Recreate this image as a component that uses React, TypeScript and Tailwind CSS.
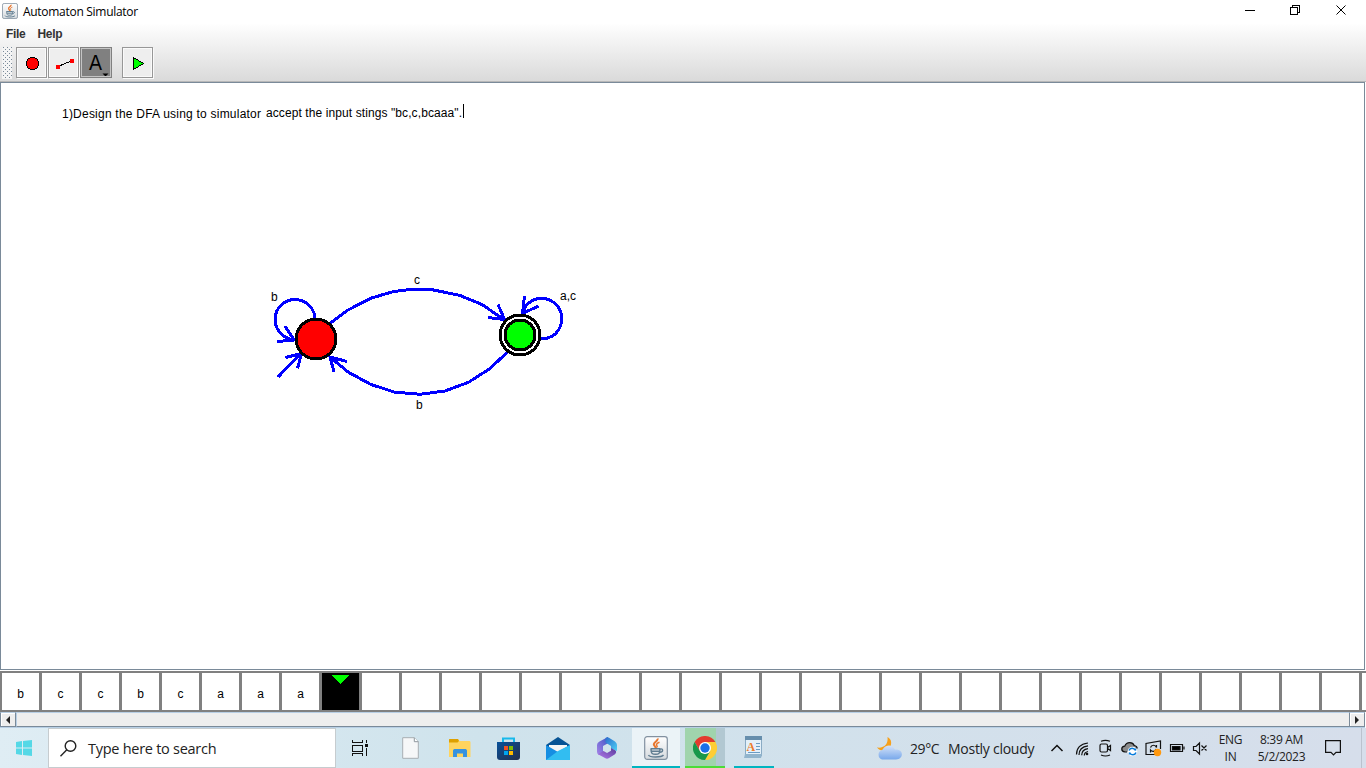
import React from "react";

const tape = ["b", "c", "c", "b", "c", "a", "a", "a"];

function JavaCup({ className }: { className: string }) {
  return (
    <svg className={className} viewBox="0 0 24 24" fill="none">
      <defs>
        <linearGradient id="tile" x1="0" y1="0" x2="0" y2="1">
          <stop offset="0" stopColor="#ffffff" />
          <stop offset="1" stopColor="#d5dade" />
        </linearGradient>
      </defs>
      <rect x="0.7" y="0.7" width="22.6" height="22.6" rx="2.5" fill="url(#tile)" stroke="#8291a0" strokeWidth="1.2" />
      <path d="M13.500 2.500c1.200 2.500-5 4-3.500 6.500 .5 1 1.800 1.500 1.300 3" stroke="#e8762d" strokeWidth="2" />
      <path d="M15.500 6.300c-2.200.8-3.700 1.900-2.700 3.200 .7.8.4 1.500-.4 2.200" stroke="#e8762d" strokeWidth="1.500" />
      <path d="M6.500 12.800h9.500M7 13c0 5 1.500 5.300 4.500 5.300s4.500-.4 4.500-5.300M7.500 15.300h8" stroke="#607d91" strokeWidth="1.500" />
      <path d="M16 13c3.500-1 3.500 3-.3 3.300M4.500 19c1 2.600 13 2.600 15 0" stroke="#607d91" strokeWidth="1.400" />
    </svg>
  );
}

function WindowControls() {
  return (
    <svg className="h-6 w-[138px]" viewBox="0 0 138 24" fill="none" stroke="#000" shapeRendering="crispEdges">
      <path d="M17 10.500h10M62.500 7.500h7v7h-7zM64.500 7.500v-2h7v7h-2" />
      <path d="M108.500 5.500l9 9M117.500 5.500l-9 9" shapeRendering="auto" />
    </svg>
  );
}

function TitleBar() {
  return (
    <header className="flex h-[23px] shrink-0 items-start bg-white">
      <JavaCup className="ml-[2px] mt-[3px] size-4" />
      <span className="ml-[5px] mt-[3px] text-[12px] leading-[17px] tracking-[-0.29px] whitespace-nowrap">Automaton Simulator</span>
      <div className="ml-auto">
        <WindowControls />
      </div>
    </header>
  );
}

const toolClass =
  "flex h-[31px] w-[31px] items-center justify-center border border-[#979797] bg-[#eee] shadow-[inset_0_0_0_1px_#fafafa,1px_1px_0_#fafafa]";

function Toolbar() {
  return (
    <div className="flex h-[36px] items-start pl-[2px] pt-[2px]">
      <svg className="h-[32px] w-[10px]" viewBox="0 0 10 32" shapeRendering="crispEdges">
        <defs>
          <pattern id="grip" width="4" height="4" patternUnits="userSpaceOnUse">
            <rect width="4" height="4" fill="#f4f4f4" />
            <path d="M1 0h1v1h-1zM3 2h1v1h-1z" fill="#7a8a99" />
          </pattern>
        </defs>
        <rect width="10" height="32" fill="url(#grip)" />
      </svg>
      <div className="ml-[4px] flex gap-px">
        <button className={toolClass}>
          <svg className="h-[27px] w-[27px] shrink-0" viewBox="0 0 27 27" shapeRendering="crispEdges">
            <circle cx="14.500" cy="14.500" r="6.200" fill="#f00" stroke="#000" />
          </svg>
        </button>
        <button className={toolClass}>
          <svg className="h-[27px] w-[27px] shrink-0" viewBox="0 0 27 27" shapeRendering="crispEdges">
            <path d="M8 17.500L21 12" stroke="#000" />
            <path d="M6 16h4v4h-4zM20 10h4v4h-4z" fill="#f00" />
          </svg>
        </button>
        <button className="flex h-[31px] w-[32px] items-center justify-end border border-[#808080] bg-[#808080] pr-[2px] shadow-[inset_1px_1px_0_#c4c4c4,inset_-1px_-1px_0_#c4c4c4]">
          <svg className="h-[27px] w-[27px] shrink-0" viewBox="0 0 27 27">
            <text x="7" y="21" fontSize="22" textLength="13" lengthAdjust="spacingAndGlyphs">A</text>
            <path d="M20.500 24.500h6l-3 3z" />
          </svg>
        </button>
      </div>
      <button className={toolClass + " ml-[10px]"}>
        <svg className="h-[27px] w-[27px] shrink-0" viewBox="0 0 27 27" shapeRendering="crispEdges">
          <path d="M9.500 8.500v12l10-6z" fill="#0f0" stroke="#000" />
        </svg>
      </button>
    </div>
  );
}

function Diagram() {
  return (
    <svg className="block h-[586px] w-[1362px]" viewBox="1 83 1362 586" fill="none">
      <g fill="#000" fontSize="12">
        <text x="62" y="118" textLength="199">1)Design the DFA using to simulator</text>
        <text x="266" y="117" textLength="196">accept the input stings "bc,c,bcaaa".</text>
        <text x="271" y="301">b</text>
        <text x="414" y="284">c</text>
        <text x="416" y="409">b</text>
        <text x="560" y="300" textLength="16">a,c</text>
      </g>
      <g shapeRendering="crispEdges">
        <path d="M463.500 104v14" stroke="#000" />
        <g stroke="#00f" strokeWidth="3">
          <path d="M315 320A20 20 0 1 0 287.500 338L294 341M285 326l9 14-17 1.500" />
          <path d="M278 377l23-24M285.500 357.500l16-4-4 15" />
          <path d="M330 323.500L348 310 371.500 298 393 291.700 408 289.700H432L445 292.300 460 295.500 482 304.500 504.500 320M498 304.500l6.500 15-16.500-2" />
          <path d="M507.500 352L490 368.500 468.500 382.300 445 391 420 394.300 394 392 370.500 384.300 348.500 372.300 330 357M334 372l-4-15 17 4.500" />
          <path d="M540.500 338.300H547A20.300 20.300 0 1 0 525 307L522.300 314M524.500 296l-2 17.500 16-7.500" />
        </g>
        <g stroke="#000" strokeWidth="3">
          <circle cx="316" cy="339" r="20" fill="#f00" />
          <circle cx="520" cy="335" r="20" fill="#fff" />
          <circle cx="520" cy="335" r="15" fill="#0f0" />
        </g>
      </g>
    </svg>
  );
}

function Tape() {
  return (
    <div className="flex h-[41px] w-[1366px] shrink-0 overflow-hidden border-y-2 border-l-2 border-[#808080] bg-white">
      {Array.from({ length: 35 }, (_, i) => (
        <div
          key={i}
          className={
            i === 8
              ? "flex w-[40px] shrink-0 justify-center border-r-[3px] border-[#808080] bg-black pr-[1px] pt-[2px]"
              : "flex w-[40px] shrink-0 items-center justify-center border-r-[3px] border-[#808080] pt-[4px] text-[12px]"
          }
        >
          {i === 8 ? (
            <svg className="h-[9px] w-[18px]" viewBox="0 0 18 9" shapeRendering="crispEdges">
              <path d="M0 0h18l-9 9z" fill="#0f0" />
            </svg>
          ) : (
            tape[i]
          )}
        </div>
      ))}
    </div>
  );
}

function ScrollBar() {
  return (
    <div className="flex h-[16px] w-[1365px] shrink-0 border-b border-[#b8cfe5] bg-[#eee]">
      <div className="flex w-[16px] items-center justify-center border-x border-b border-t border-[#7a8a99] border-t-[#b8cfe5] bg-[#eee] shadow-[inset_1px_1px_white]">
        <svg className="h-[8px] w-[4px]" viewBox="0 0 4 8"><path d="M4 0v8L0 4z" fill="#222" /></svg>
      </div>
      <div className="flex-1 border-b border-l border-t border-[#b8cfe5] border-b-[#7a8a99]" />
      <div className="flex w-[16px] items-center justify-center border-x border-b border-t border-[#7a8a99] border-t-[#b8cfe5] bg-[#eee] shadow-[inset_1px_1px_white]">
        <svg className="h-[8px] w-[4px]" viewBox="0 0 4 8"><path d="M0 0v8l4-4z" fill="#222" /></svg>
      </div>
    </div>
  );
}

function PinnedIcons() {
  return (
    <>
      <div className="flex w-[48px] justify-center">
        <svg className="h-[16px] w-[17px]" viewBox="0 0 17 16" fill="none" stroke="#111" shapeRendering="crispEdges">
          <path d="M.5 0v2.500h10V0M.5 5.500h10v6H.5zM.5 16v-2.500h10V16M14.500 0v3M14.500 8v8" />
          <path d="M13 4h3v3h-3z" fill="#111" stroke="none" />
        </svg>
      </div>
      <div className="flex w-[53px] justify-center">
        <svg className="h-[22px] w-[17px]" viewBox="0 0 17 22">
          <path d="M.7.7h11.600l4 4v16.600H.7z" fill="#f6f7f8" stroke="#a8aeb3" />
          <path d="M12.300.7v4h4" fill="#fff" stroke="#8e969d" />
        </svg>
      </div>
      <div className="flex w-[44px] justify-center pl-[2px]">
        <svg className="h-[19px] w-[22px]" viewBox="0 0 22 19">
          <path d="M0 1c0-.6.4-1 1-1h8l1.500 2H20c1 0 1.500.5 1.500 1.500V18H0z" fill="#ffd45e" />
          <path d="M0 1c0-.6.4-1 1-1h8l1 2-1.500 1.500H0z" fill="#dea000" />
          <path d="M4 18v-6c0-1 .5-2 1.500-2h11c1 0 1.500 1 1.500 2v6h-4v-3.500H8V18z" fill="#3692e0" />
        </svg>
      </div>
      <div className="flex w-[54px] justify-center">
        <svg className="h-[23px] w-[23px]" viewBox="0 0 23 23">
          <defs><linearGradient id="store" x1="0" y1="0" x2="1" y2="1"><stop stopColor="#08519a" /><stop offset="1" stopColor="#252e4c" /></linearGradient></defs>
          <path d="M6 7V1.500h11V7" fill="none" stroke="#18b9eb" strokeWidth="2" />
          <path d="M0 5h23v15c0 2-1 3-3 3H3c-2 0-3-1-3-3z" fill="url(#store)" />
          <path d="M7 9h4v4H7z" fill="#f25022" /><path d="M12 9h4v4h-4z" fill="#7fba00" />
          <path d="M7 14h4v4H7z" fill="#00a4ef" /><path d="M12 14h4v4h-4z" fill="#ffb900" />
        </svg>
      </div>
      <div className="flex w-[46px] justify-center">
        <svg className="h-[23px] w-[24px]" viewBox="0 0 24 23">
          <path d="M0 8L12 0l12 8v4H0z" fill="#075394" />
          <path d="M3 8h18v8H3z" fill="#f5f5f5" />
          <path d="M0 8l12 7 12-7v15H0z" fill="#168ee2" />
          <path d="M0 23l12-9 12-6v15z" fill="#32bdf1" />
        </svg>
      </div>
      <div className="flex w-[51px] justify-center">
        <svg className="h-[22px] w-[20px]" viewBox="0 0 20 22">
          <defs>
            <linearGradient id="m1" x1="0" y1="1" x2="1" y2="0"><stop stopColor="#a884e8" /><stop offset="1" stopColor="#3a54c4" /></linearGradient>
            <linearGradient id="m2" x1="0" y1="1" x2="1" y2="0"><stop stopColor="#b07bea" /><stop offset="1" stopColor="#5a3a9c" /></linearGradient>
            <linearGradient id="m3" x1="0" y1="0" x2="1" y2="1"><stop stopColor="#2a6ccc" /><stop offset="1" stopColor="#4fd0f5" /></linearGradient>
          </defs>
          <path d="M11 0L2.500 4.600Q0 6 0 8v7q0 2 2 3l4-2.500V9l5.500-3z" fill="url(#m1)" />
          <path d="M8.500 1Q10-.3 12 .8L18 4.500Q20 6 20 8v6l-6-2.500V9L8.500 5.500z" fill="url(#m3)" />
          <path d="M1 17.300L6.500 14l3.500 2 4-2.300V11l4.500 2.500Q20 15 18 17.300L12 21q-2 1.500-4 0z" fill="url(#m2)" />
        </svg>
      </div>
    </>
  );
}

function Chrome() {
  return (
    <svg className="size-[24px]" viewBox="0 0 24 24">
      <path d="M12 6h10.400A12 12 0 0 0 1.600 6l5.200 9z" fill="#e33b2e" />
      <path d="M12 24l5.200-9V9l-5-3h10.200A12 12 0 0 1 12 24z" fill="#ffcd35" />
      <path d="M1.600 6l5.200 9L12 18l5.200-3L12 24A12 12 0 0 1 1.600 6z" fill="#18984a" />
      <circle cx="12" cy="12" r="6" fill="#fff" />
      <circle cx="12" cy="12" r="4.700" fill="#1a6fe8" />
    </svg>
  );
}

function Weather() {
  return (
    <svg className="h-[23px] w-[25px] shrink-0" viewBox="0 0 25 23">
      <defs><linearGradient id="cloud" x1="0" y1="0" x2="0" y2="1"><stop stopColor="#d4e2f8" /><stop offset="1" stopColor="#78a8eb" /></linearGradient></defs>
      <path d="M10.500 0c4.500 2 5 8 1 12-4 3-8.500 2-11.500-1.500 7 1 11.500-3.500 10.500-10.500z" fill="#f6a01b" />
      <path d="M5 22.500a5 5 0 0 1 0-9.500c1.500-.5 2-4.500 7-4.500 4 0 5 3 6 4 9-1 9 10 1 10z" fill="url(#cloud)" />
    </svg>
  );
}

function TrayIcons() {
  return (
    <svg className="h-[40px] w-[166px] shrink-0" viewBox="1046 728 166 40" fill="none" stroke="#111" strokeWidth="1.200">
      <path d="M1051.500 751l5.500-5.500 5.500 5.500" strokeWidth="1.500" />
      <g>
        <path d="M1076.500 754.500c0-6 4-10.500 11.500-11.500M1079 755c0-5 3.500-8.500 9-9.200M1081.700 755.300c0-3.500 2.300-6 6.300-6.600M1084.300 755.500c0-2 1.500-3.500 3.700-4" />
        <circle cx="1087" cy="754" r="1.300" fill="#111" stroke="none" />
      </g>
      <path d="M1101.500 744h4.500q1.500 0 1.500 1.500v5q0 1.500-1.500 1.500h-4.500q-1.500 0-1.500-1.500v-5q0-1.500 1.500-1.500zM1108 747.200l2.500-1.700v5l-2.500-1.700M1101 741.300q4.500-2 9 0M1101 755q4.500 2 9 0" />
      <path d="M1127 752h-2c-4.500-.5-4-5.500-.3-5.800 2-5 8-4.500 9.500-.7 2 .3 3 1.500 3 3" fill="#8b8b8b" />
      <circle cx="1132.500" cy="751.500" r="4.800" fill="#fff" stroke="none" />
      <path d="M1129 750.500c1-3 5-3 6.500 0v-2M1136 752.500c-1 3-5 3-6.500 0v2" stroke="#087cdc" strokeWidth="1.500" />
      <path d="M1155 754.500h-9v-11l14.500-2.500v8M1150.500 747.500c1-3 5-3 6 0v-2.500M1156 749c-1 3-4 3-5.500 1v2.500" />
      <circle cx="1157.500" cy="752.500" r="3.700" fill="#ff980f" stroke="none" />
      <path d="M1170.500 744.500h12v7h-12zM1184 746.500v3" />
      <path d="M1172.500 746.500h7.500v3.500h-7.500z" fill="#000" />
      <path d="M1193.500 746.500h2.500l3.500-3.500v11l-3.500-3.500h-2.500zM1201.500 745.500l5 5M1206.500 745.500l-5 5" />
    </svg>
  );
}

function Taskbar() {
  return (
    <footer className="flex h-[40px] shrink-0 items-center bg-linear-to-r from-[#dfedf4] via-[#cfe3ec] via-35% to-[#d6deeb] text-[#222]">
      <div className="flex w-[48px] justify-center">
        <svg className="size-[16px]" viewBox="0 0 16 16" fill="#55d8e6">
          <path d="M0 2l6-1v6.500H0zM7 .9l9-.9v7.500H7zM0 8.500h6V15l-6-1zM7 8.500h9V16l-9-1z" />
        </svg>
      </div>
      <div className="flex h-full w-[288px] items-center border border-[#c6cccf] bg-white pl-[11px]">
        <svg className="h-[17px] w-[17px]" viewBox="0 0 17 17" fill="none" stroke="#222" strokeWidth="1.400">
          <circle cx="10.500" cy="6" r="5.300" /><path d="M6.800 9.800L.5 16.200" />
        </svg>
        <span className="ml-[11px] mt-px text-[14.5px] tracking-[-0.27px] whitespace-nowrap">Type here to search</span>
      </div>
      <PinnedIcons />
      <div className="flex h-full w-[48px] items-center justify-center border-b-2 border-[#00b5c0] bg-[#ebf3f7] pt-[2px]">
        <JavaCup className="size-[24px]" />
      </div>
      <div className="ml-[5px] flex h-full w-[40px] items-center justify-center border-b-2 border-[#4bdc36] bg-linear-to-r from-[#a0d4ad] from-78% to-[#b2c8d2] to-78% pt-[2px]">
        <Chrome />
      </div>
      <div className="ml-[9px] flex h-full w-[40px] items-center justify-center border-b-2 border-[#00b5c0] pr-[1px]">
        <svg className="h-[22px] w-[19px]" viewBox="0 0 19 22">
          <path d="M1.500 1h16v19h-16z" fill="#e3f0f9" stroke="#8aabc4" />
          <path d="M1 0h17v4H1z" fill="#668eac" />
          <path d="M1 18h17l-1 4H0z" fill="#91b4cc" />
          <text x="2.500" y="14.500" fontSize="12" fontWeight="bold" fill="#ed7b2c" className="font-['Liberation_Serif',serif]">A</text>
          <path d="M12 7.500h4M12 10.500h4M12 13.500h4M4 16.500h12" stroke="#6b9cc4" />
        </svg>
      </div>
      <div className="ml-auto flex h-full w-[489px] items-center">
        <Weather />
        <span className="ml-[8px] mt-px w-[38px] text-[14px] tracking-[-0.4px] whitespace-nowrap">29°C</span>
        <span className="mt-px w-[98px] text-[14px] tracking-[-0.27px] whitespace-nowrap">Mostly cloudy</span>
        <TrayIcons />
        <div className="flex w-[37px] flex-col items-center text-[12px] leading-[17px] tracking-[-0.3px]"><span>ENG</span><span>IN</span></div>
        <div className="flex w-[65px] flex-col items-center text-[12px] leading-[17px] tracking-[-0.32px] whitespace-nowrap"><span>8:39 AM</span><span>5/2/2023</span></div>
        <svg className="ml-[11px] h-[16px] w-[16px]" viewBox="0 0 16 16" fill="none" stroke="#111" strokeWidth="1.200">
          <path d="M.6.6h14.800v11.800H11L8.500 15 6 12.400H.6z" />
        </svg>
        <div className="ml-[20px] h-full w-px bg-[#bac2ce]" />
      </div>
    </footer>
  );
}

export default function App() {
  return (
    <main className="flex h-[768px] w-[1366px] flex-col overflow-hidden bg-white font-['Liberation_Sans',Arial,sans-serif] text-black">
      <div className="contents font-['Open_Sans','Noto_Sans',sans-serif]"><TitleBar /></div>
      <div className="h-[59px] shrink-0 border-b border-[#b8b8b8] bg-linear-to-b from-white to-[#dadada]">
        <nav className="flex h-[22px] items-center gap-[12px] pl-[6px] text-[12px] font-bold tracking-[-0.3px] text-[#333]">
          <span>File</span>
          <span>Help</span>
        </nav>
        <Toolbar />
      </div>
      <div className="h-[588px] w-[1365px] shrink-0 border border-[#7a8a99] bg-white">
        <Diagram />
      </div>
      <div className="h-px shrink-0 bg-white" />
      <Tape />
      <ScrollBar />
      <div className="contents font-['Open_Sans','Noto_Sans',sans-serif]"><Taskbar /></div>
    </main>
  );
}
